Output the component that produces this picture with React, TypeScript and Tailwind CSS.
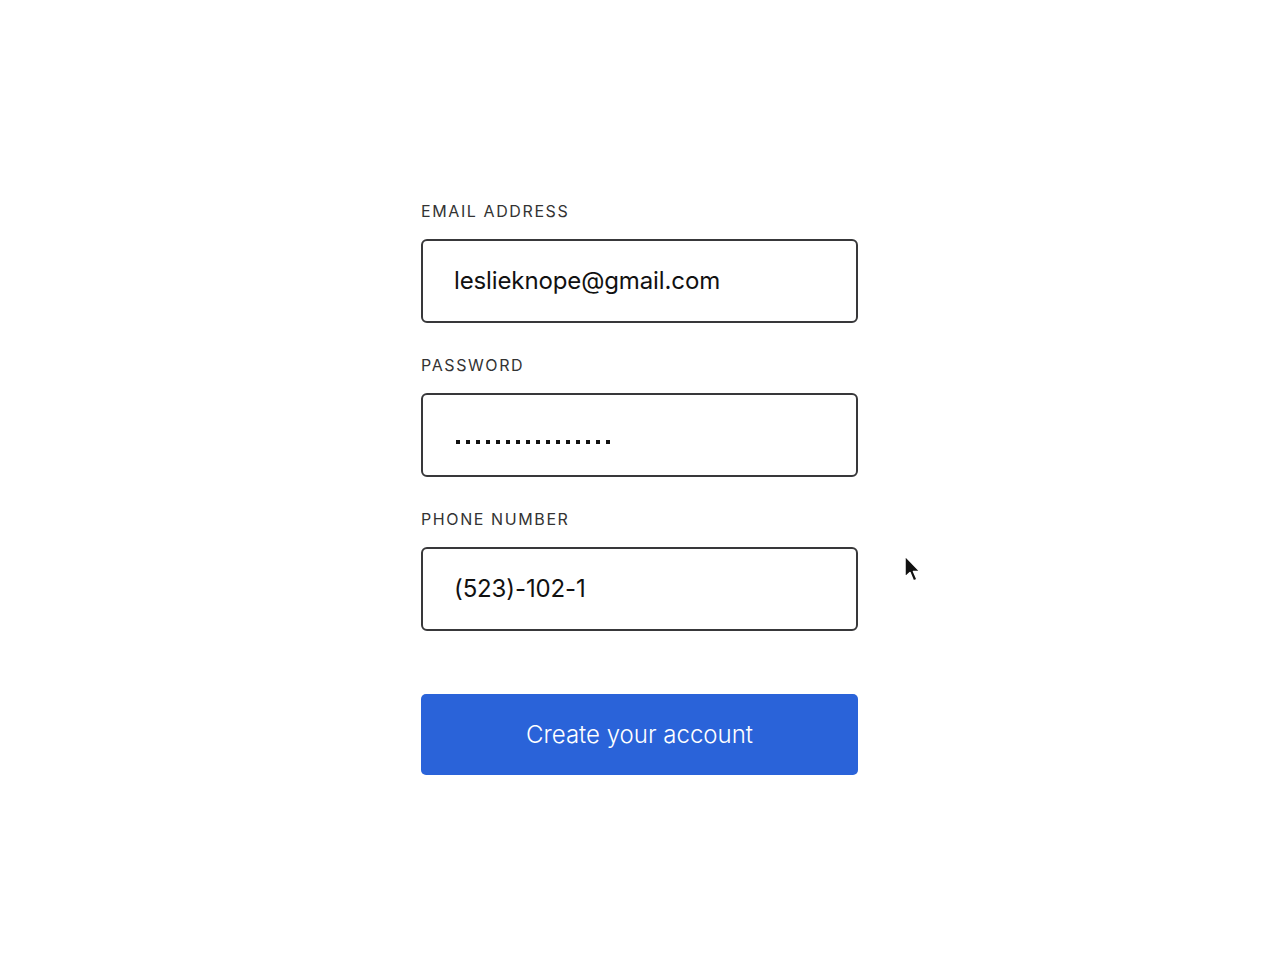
const fields = [
    { label: 'EMAIL ADDRESS', value: 'leslieknope@gmail.com' },
    { label: 'PASSWORD', value: '' },
    { label: 'PHONE NUMBER', value: '(523)-102-1' },
];

const Dots = () => (
    <div className="flex items-center gap-[6px] pt-[14px] pl-[2px]">
        {Array.from({ length: 16 }).map((_, i) => (
            <span key={i} className="block w-[4px] h-[4px] bg-[#111]" />
        ))}
    </div>
);

const Pointer = () => (
    <svg className="absolute left-[903px] top-[555px]" width="20" height="30" viewBox="0 0 20 30">
        <path
            d="M2 1 L2 22 L7 17.5 L10.5 26 L14 24.5 L10.5 16.5 L17 16.5 Z"
            fill="#111"
            stroke="#fff"
            strokeWidth="1.5"
            strokeLinejoin="round"
        />
    </svg>
);

export default function App() {
    return (
        <div className="relative min-h-[959px] bg-white font-['Inter',sans-serif]">
            <div className="w-[437px] mx-auto pt-[201px] flex flex-col">
                {fields.map((f, i) => (
                    <div key={f.label} className={i === 0 ? '' : 'mt-[32px]'}>
                        <label className="block text-[16px] leading-[20px] tracking-[0.1em] text-[#333]">
                            {f.label}
                        </label>
                        <div className="mt-[18px] h-[84px] border-2 border-[#38383a] rounded-[6px] px-[31px] flex items-center">
                            {f.value ? (
                                <span className="text-[24px] text-[#111] tracking-[-0.005em]">{f.value}</span>
                            ) : (
                                <Dots />
                            )}
                        </div>
                    </div>
                ))}
                <button className="mt-[63px] h-[81px] w-full rounded-[5px] bg-[#2a63d9] text-white text-[24px] font-light">
                    Create your account
                </button>
            </div>
            <Pointer />
        </div>
    );
}
